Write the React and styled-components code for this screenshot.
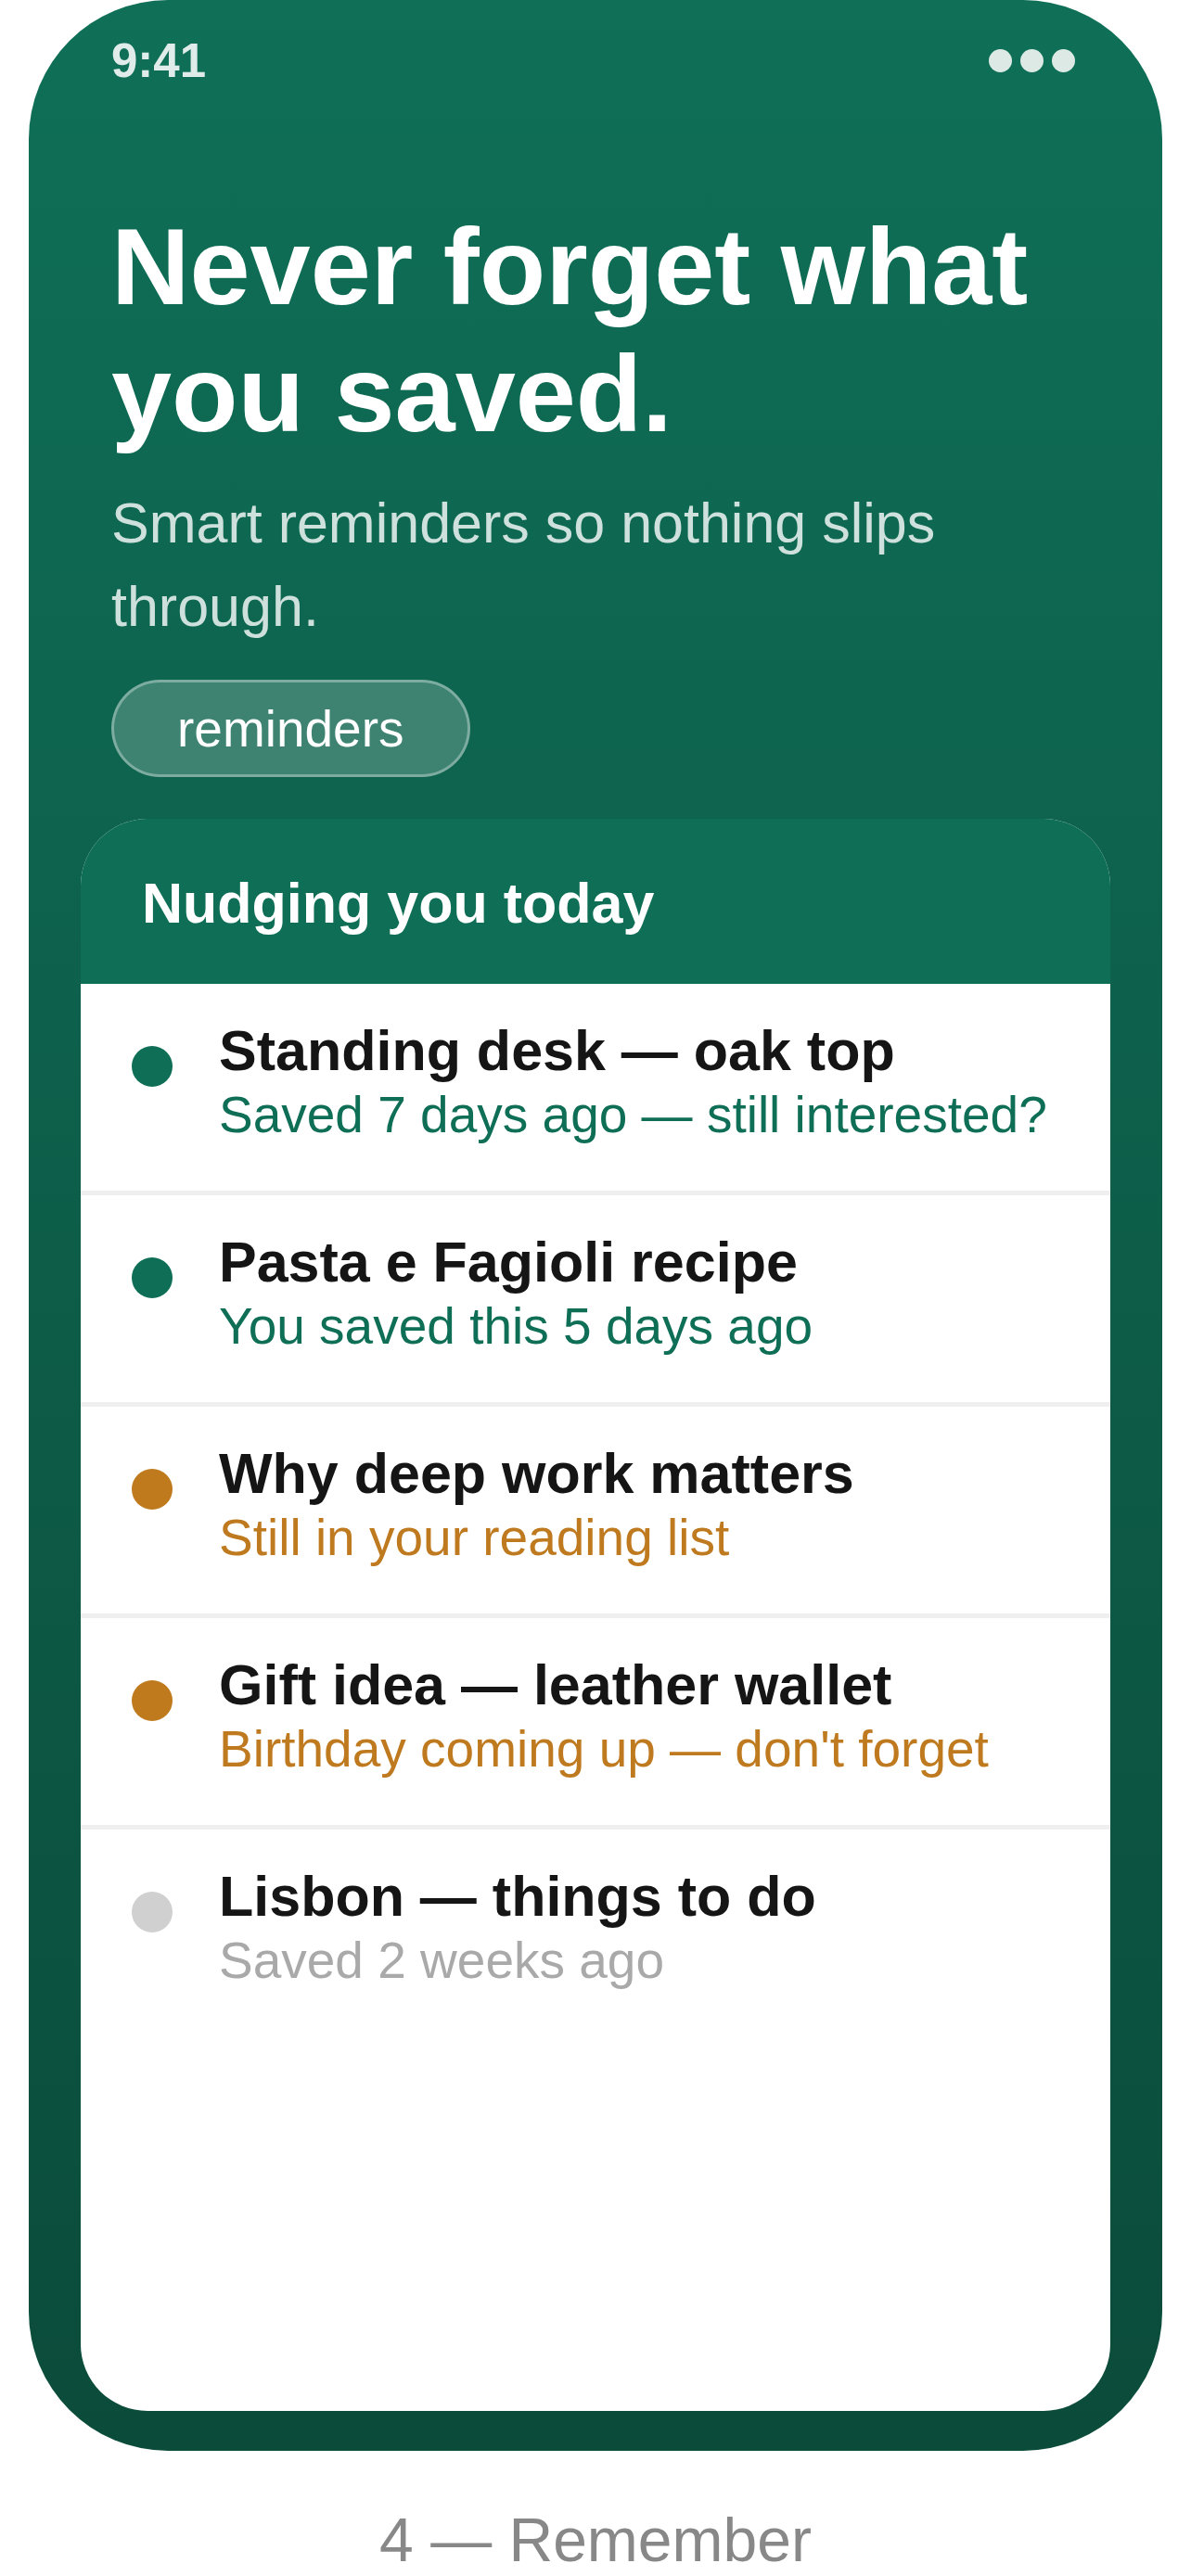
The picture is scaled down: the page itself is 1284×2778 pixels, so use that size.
import React from "react"
import styled, { createGlobalStyle } from "styled-components"

const GlobalStyle = createGlobalStyle`
  html, body {
    margin: 0;
    padding: 0;
    background: #ffffff;
  }

  body {
    font-family: "Liberation Sans", Arial, sans-serif;
    -webkit-font-smoothing: antialiased;
  }
`

const tones = {
  green: { dot: "#0f6e56", text: "#0f6e56" },
  amber: { dot: "#c07a1e", text: "#bf7a1f" },
  muted: { dot: "#d0d0d0", text: "#a9a9a9" },
}

const Page = styled.div`
  width: 1284px;
  display: flex;
  flex-direction: column;
  align-items: center;
`

const Phone = styled.div`
  width: 1222px;
  height: 2643px;
  border-radius: 150px;
  overflow: hidden;
  background: linear-gradient(180deg, #0f6f57 0%, #0d5c48 55%, #0b4b3a 100%);
  display: flex;
  flex-direction: column;
`

const StatusBar = styled.div`
  display: flex;
  justify-content: space-between;
  align-items: center;
  padding: 36px 94px 0 89px;
  height: 59px;
  font-size: 51px;
  line-height: 59px;
  font-weight: 700;
  color: rgba(255, 255, 255, 0.87);
`

const Dots = styled.div`
  display: flex;
  gap: 9px;

  span {
    width: 25px;
    height: 25px;
    border-radius: 50%;
    background: #dce9e5;
  }
`

const Hero = styled.header`
  padding: 0 89px;
  margin-top: 124px;
`

const Headline = styled.h1`
  margin: 0;
  font-size: 117px;
  line-height: 137px;
  font-weight: 700;
  color: #ffffff;
`

const Subtitle = styled.p`
  margin: 26px 0 0;
  font-size: 61px;
  line-height: 90px;
  color: rgba(255, 255, 255, 0.8);
`

const Pill = styled.span`
  margin-top: 34px;
  display: inline-flex;
  align-items: center;
  justify-content: center;
  box-sizing: border-box;
  height: 105px;
  padding: 0 68px;
  border-radius: 999px;
  border: 3px solid rgba(255, 255, 255, 0.33);
  background: rgba(255, 255, 255, 0.2);
  font-size: 55px;
  color: #ffffff;
`

const Card = styled.section`
  flex: 1;
  margin: 45px 56px 43px;
  border-radius: 72px;
  overflow: hidden;
  background: #ffffff;
  display: flex;
  flex-direction: column;
`

const CardHeader = styled.div`
  height: 178px;
  box-sizing: border-box;
  padding: 4px 66px 0;
  display: flex;
  align-items: center;
  background: #0f6e56;
  font-size: 61px;
  font-weight: 700;
  color: #ffffff;
`

const List = styled.ul`
  list-style: none;
  margin: 0;
  padding: 0;
`

const Row = styled.li`
  display: flex;
  align-items: flex-start;
  gap: 50px;
  padding: 36px 40px 49px 55px;
  border-bottom: 5px solid #efefef;

  &:last-child {
    border-bottom: none;
  }
`

const Dot = styled.span`
  flex-shrink: 0;
  width: 44px;
  height: 44px;
  margin-top: 31px;
  border-radius: 50%;
  background: ${props => props.color};
`

const RowText = styled.div`
  display: flex;
  flex-direction: column;
`

const Title = styled.div`
  font-size: 61px;
  line-height: 72px;
  font-weight: 700;
  color: #151515;
`

const Note = styled.div`
  font-size: 55px;
  line-height: 66px;
  color: ${props => props.color};
`

const Caption = styled.div`
  margin-top: 58px;
  font-size: 66px;
  color: #888888;
  text-align: center;
`

const nudges = [
  { title: "Standing desk — oak top", note: "Saved 7 days ago — still interested?", tone: "green" },
  { title: "Pasta e Fagioli recipe", note: "You saved this 5 days ago", tone: "green" },
  { title: "Why deep work matters", note: "Still in your reading list", tone: "amber" },
  { title: "Gift idea — leather wallet", note: "Birthday coming up — don't forget", tone: "amber" },
  { title: "Lisbon — things to do", note: "Saved 2 weeks ago", tone: "muted" },
]

const App = () => {
  return (
    <>
      <GlobalStyle />
      <Page>
        <Phone>
          <StatusBar>
            <span>9:41</span>
            <Dots>
              <span />
              <span />
              <span />
            </Dots>
          </StatusBar>

          <Hero>
            <Headline>Never forget what you saved.</Headline>
            <Subtitle>Smart reminders so nothing slips through.</Subtitle>
            <Pill>reminders</Pill>
          </Hero>

          <Card>
            <CardHeader>Nudging you today</CardHeader>
            <List>
              {nudges.map(item => (
                <Row key={item.title}>
                  <Dot color={tones[item.tone].dot} />
                  <RowText>
                    <Title>{item.title}</Title>
                    <Note color={tones[item.tone].text}>{item.note}</Note>
                  </RowText>
                </Row>
              ))}
            </List>
          </Card>
        </Phone>
        <Caption>4 — Remember</Caption>
      </Page>
    </>
  )
}

export default App
